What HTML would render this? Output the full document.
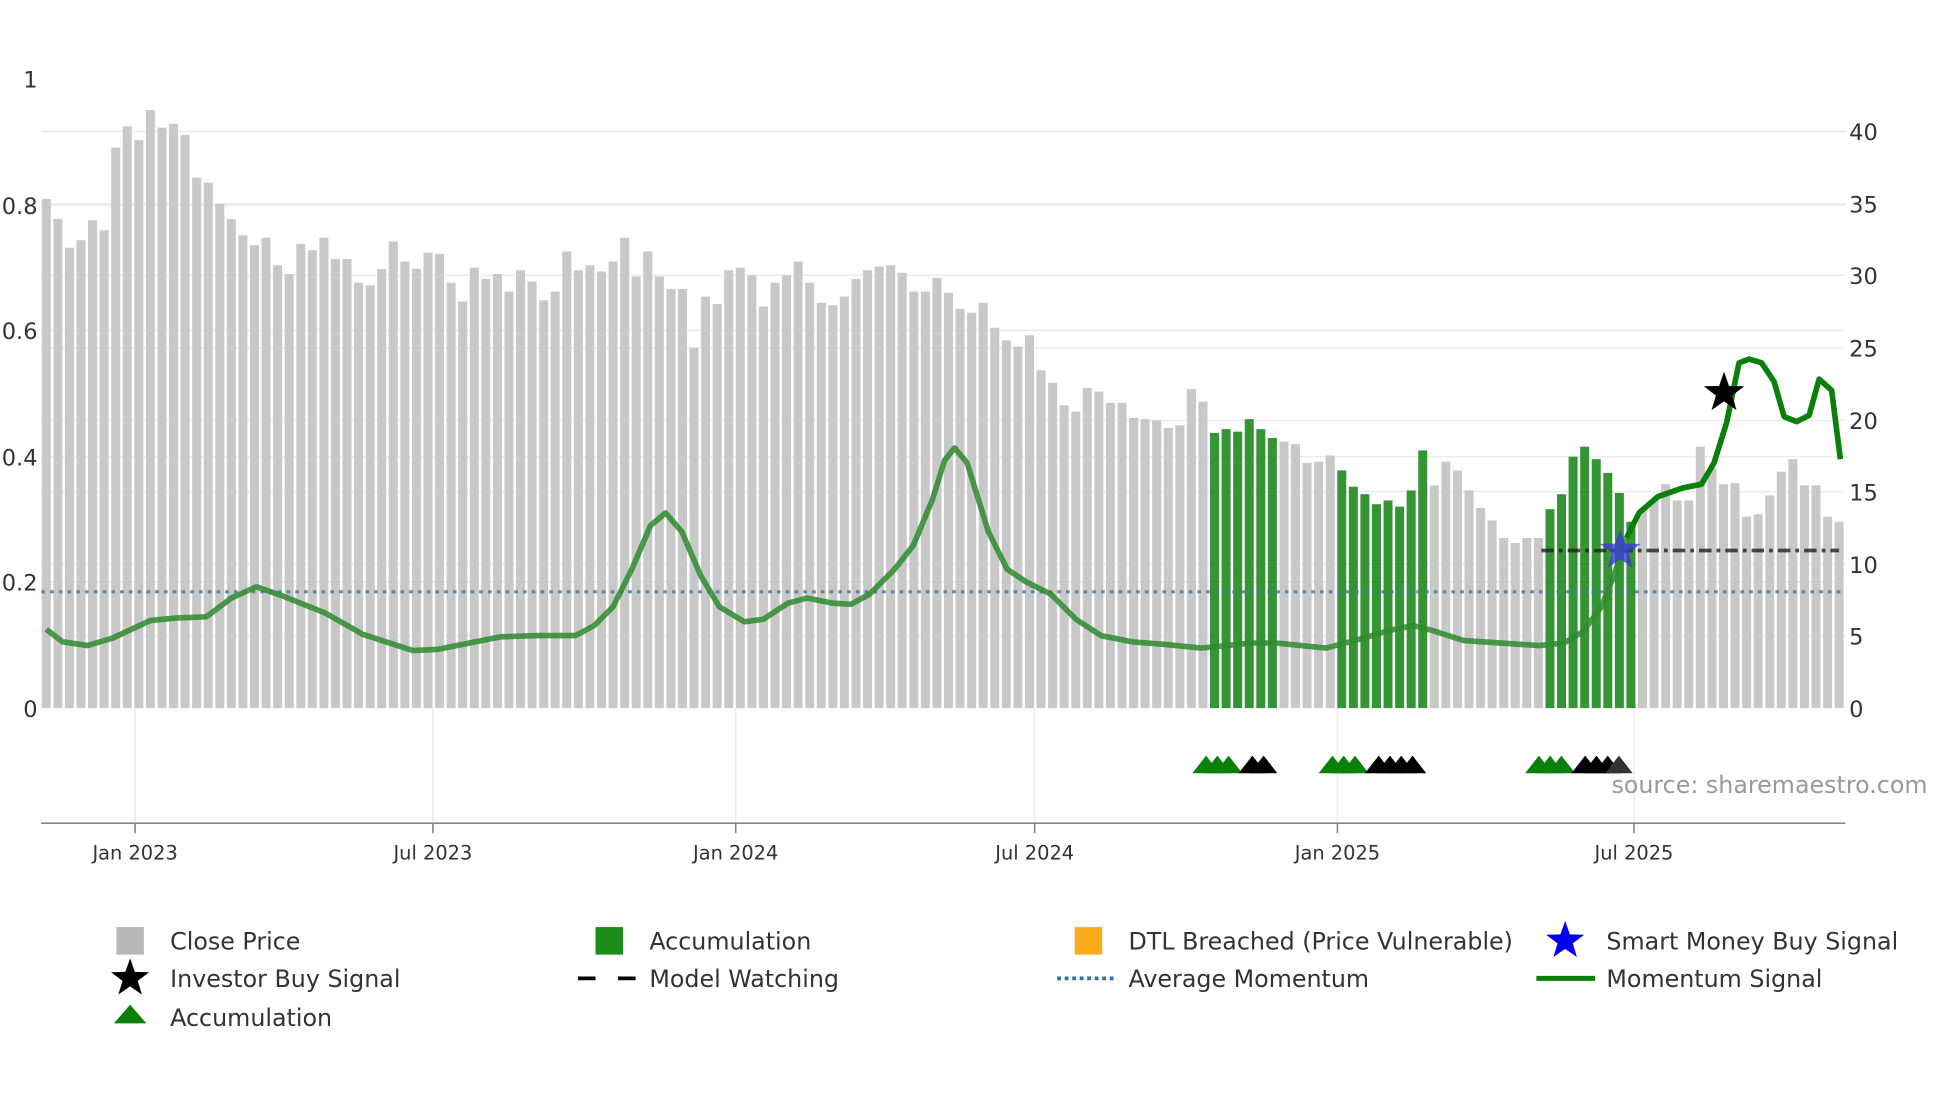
<!DOCTYPE html>
<html><head><meta charset="utf-8"><style>
html,body{margin:0;padding:0;background:#fff;width:1960px;height:1102px;overflow:hidden}
svg text{font-family:"DejaVu Sans","Liberation Sans",sans-serif}
</style></head><body>
<svg id="c" width="1960" height="1102" viewBox="0 0 1566.6 880.8" xmlns="http://www.w3.org/2000/svg">
<g id="grid" stroke="#e9edf3" stroke-width="1.3"></g>
<g id="bars"></g>
<line x1="33" y1="473" x2="1475" y2="473" stroke="#4a7aa0" stroke-width="2.5" stroke-dasharray="3,4" opacity="0.85"/>
<line x1="1232" y1="440" x2="1470" y2="440" stroke="#222" stroke-width="3" stroke-dasharray="10,4,3,4" opacity="0.8"/>
<polyline id="m1" fill="none" stroke="#2e8b2e" stroke-opacity="0.85" stroke-width="4.5" stroke-linejoin="round"/>
<polyline id="m2" fill="none" stroke="#0a800a" stroke-width="4.5" stroke-linejoin="round"/>
<polygon id="bstar" fill="#3b3bd6" opacity="0.8"/>
<polygon id="kstar" fill="#000"/>
<g id="tri"></g>
<line x1="33" y1="658" x2="1475" y2="658" stroke="#888" stroke-width="1.3"/>
<g stroke="#888" stroke-width="1.3">
<line x1="108" y1="658" x2="108" y2="666"/><line x1="346" y1="658" x2="346" y2="666"/><line x1="588" y1="658" x2="588" y2="666"/><line x1="827" y1="658" x2="827" y2="666"/><line x1="1069" y1="658" x2="1069" y2="666"/><line x1="1306" y1="658" x2="1306" y2="666"/>
</g>
<g font-size="15.5" fill="#333" text-anchor="middle">
<text x="108" y="687">Jan 2023</text><text x="346" y="687">Jul 2023</text><text x="588" y="687">Jan 2024</text><text x="827" y="687">Jul 2024</text><text x="1069" y="687">Jan 2025</text><text x="1306" y="687">Jul 2025</text>
</g>
<g font-size="18" fill="#333" text-anchor="end">
<text x="30" y="70">1</text><text x="30" y="171">0.8</text><text x="30" y="271">0.6</text><text x="30" y="372">0.4</text><text x="30" y="472">0.2</text><text x="30" y="573">0</text>
</g>
<g font-size="18" fill="#333">
<text x="1478" y="112">40</text><text x="1478" y="170">35</text><text x="1478" y="227">30</text><text x="1478" y="285">25</text><text x="1478" y="343">20</text><text x="1478" y="400">15</text><text x="1478" y="458">10</text><text x="1478" y="515">5</text><text x="1478" y="573">0</text>
</g>
<text x="1288" y="634" font-size="19" fill="#999">source: sharemaestro.com</text>
<g font-size="19" fill="#333">
<rect x="93" y="741" width="22" height="22" fill="#b8b8b8"/><text x="136" y="759">Close Price</text>
<rect x="476" y="741" width="22" height="22" fill="#1a8c1a"/><text x="519" y="759">Accumulation</text>
<rect x="859" y="741" width="22" height="22" fill="#fbac1e"/><text x="902" y="759">DTL Breached (Price Vulnerable)</text>
<polygon id="lstar1" fill="#0000ee"/><text x="1284" y="759">Smart Money Buy Signal</text>
<polygon id="lstar2" fill="#000"/><text x="136" y="789">Investor Buy Signal</text>
<line x1="462" y1="782" x2="508" y2="782" stroke="#000" stroke-width="3" stroke-dasharray="14,18"/><text x="519" y="789">Model Watching</text>
<line x1="845" y1="782" x2="891" y2="782" stroke="#2f6fa8" stroke-width="3" stroke-dasharray="3,3"/><text x="902" y="789">Average Momentum</text>
<line x1="1228" y1="782" x2="1275" y2="782" stroke="#0a800a" stroke-width="4"/><text x="1284" y="789">Momentum Signal</text>
<polygon points="104,803 91,818 117,818" fill="#0a800a"/><text x="136" y="820">Accumulation</text>
</g>
</svg>
<script>
var NS="http://www.w3.org/2000/svg";
function el(t,a,p){var e=document.createElementNS(NS,t);for(var k in a)e.setAttribute(k,a[k]);document.getElementById(p).appendChild(e);return e;}
[105,163,220,278,336,393,451,508,164,264,365,465].forEach(function(y){el('line',{x1:33,x2:1475,y1:y,y2:y},'grid');});
[108,346,588,827,1069,1306].forEach(function(x){el('line',{x1:x,x2:x,y1:566,y2:658},'grid');});
var tops=[159,175,198,192,176,184,118,101,112,88,102,99,108,142,146,163,175,188,196,190,212,219,195,200,190,207,207,226,228,215,193,209,215,202,203,226,241,214,223,219,233,216,225,240,233,201,216,212,217,209,190,221,201,221,231,231,278,237,243,216,214,220,245,226,220,209,226,242,244,237,223,216,213,212,218,233,233,222,234,247,250,242,262,272,277,268,296,306,324,329,310,313,322,322,334,335,336,342,340,311,321,
346,343,345,335,343,350,353,355,370,369,364,
376,389,395,403,400,405,392,360,
388,369,376,392,406,416,430,434,430,430,
407,395,365,357,367,378,394,417,
407,399,387,400,400,357,374,387,386,413,411,396,377,367,388,388,413,417];
var n=tops.length,sp=(1470-37)/(n-1);
for(var i=0;i<n;i++){var idx=i+1;var g=(idx>=102&&idx<=107)||(idx>=113&&idx<=120)||(idx>=131&&idx<=138);
var x=37+i*sp;el('rect',{x:x-3.6,y:tops[i],width:7.2,height:566-tops[i],fill:g?'#2a8f2a':'#c8c8c8','fill-opacity':g?0.95:1},'bars');}
var pts=[[37,503],[50,513],[70,516],[90,510],[120,496],[140,494],[165,493],[185,478],[205,469],[225,476],[260,490],[290,507],[330,520],[350,519],[400,509],[430,508],[460,508],[475,500],[490,485],[505,455],[520,420],[532,410],[545,425],[560,460],[575,485],[595,497],[610,495],[630,482],[645,478],[665,482],[680,483],[695,475],[715,455],[730,436],[745,400],[755,368],[763,358],[773,370],[790,425],[805,455],[820,465],[840,475],[860,495],[880,508],[905,513],[930,515],[960,518],[1000,514],[1020,514],[1060,518],[1090,510],[1110,504],[1130,500],[1145,504],[1170,512],[1200,514],[1230,516],[1250,514],[1265,505],[1280,485],[1290,460],[1300,430]];
var pts2=[[1300,430],[1310,410],[1325,397],[1345,390],[1360,387],[1370,370],[1380,338],[1390,290],[1398,287],[1408,290],[1418,305],[1426,333],[1436,337],[1446,332],[1454,303],[1464,312],[1471,367]];
document.getElementById('m1').setAttribute('points',pts.map(function(p){return p.join(',')}).join(' '));
document.getElementById('m2').setAttribute('points',pts2.map(function(p){return p.join(',')}).join(' '));
function star(cx,cy,R){var r=R*0.4,s=[];for(var k=0;k<10;k++){var a=-Math.PI/2+k*Math.PI/5,rr=k%2?r:R;s.push((cx+rr*Math.cos(a)).toFixed(1)+','+(cy+rr*Math.sin(a)).toFixed(1));}return s.join(' ');}
document.getElementById('bstar').setAttribute('points',star(1295,440,17));
document.getElementById('kstar').setAttribute('points',star(1378,314,17));
document.getElementById('lstar1').setAttribute('points',star(1251,752,16));
document.getElementById('lstar2').setAttribute('points',star(104,782,16));
function tri(x,c){el('polygon',{points:(x-11)+',618 '+x+',604 '+(x+11)+',618',fill:c},'tri');}
[964,973,982].forEach(function(x){tri(x,'#0a800a')});[1001,1010].forEach(function(x){tri(x,'#000')});
[1065,1074,1083].forEach(function(x){tri(x,'#0a800a')});[1102,1111,1120,1129].forEach(function(x){tri(x,'#000')});
[1230,1239,1248].forEach(function(x){tri(x,'#0a800a')});[1267,1276,1285].forEach(function(x){tri(x,'#000')});tri(1294,'#333');
</script>
</body></html>
